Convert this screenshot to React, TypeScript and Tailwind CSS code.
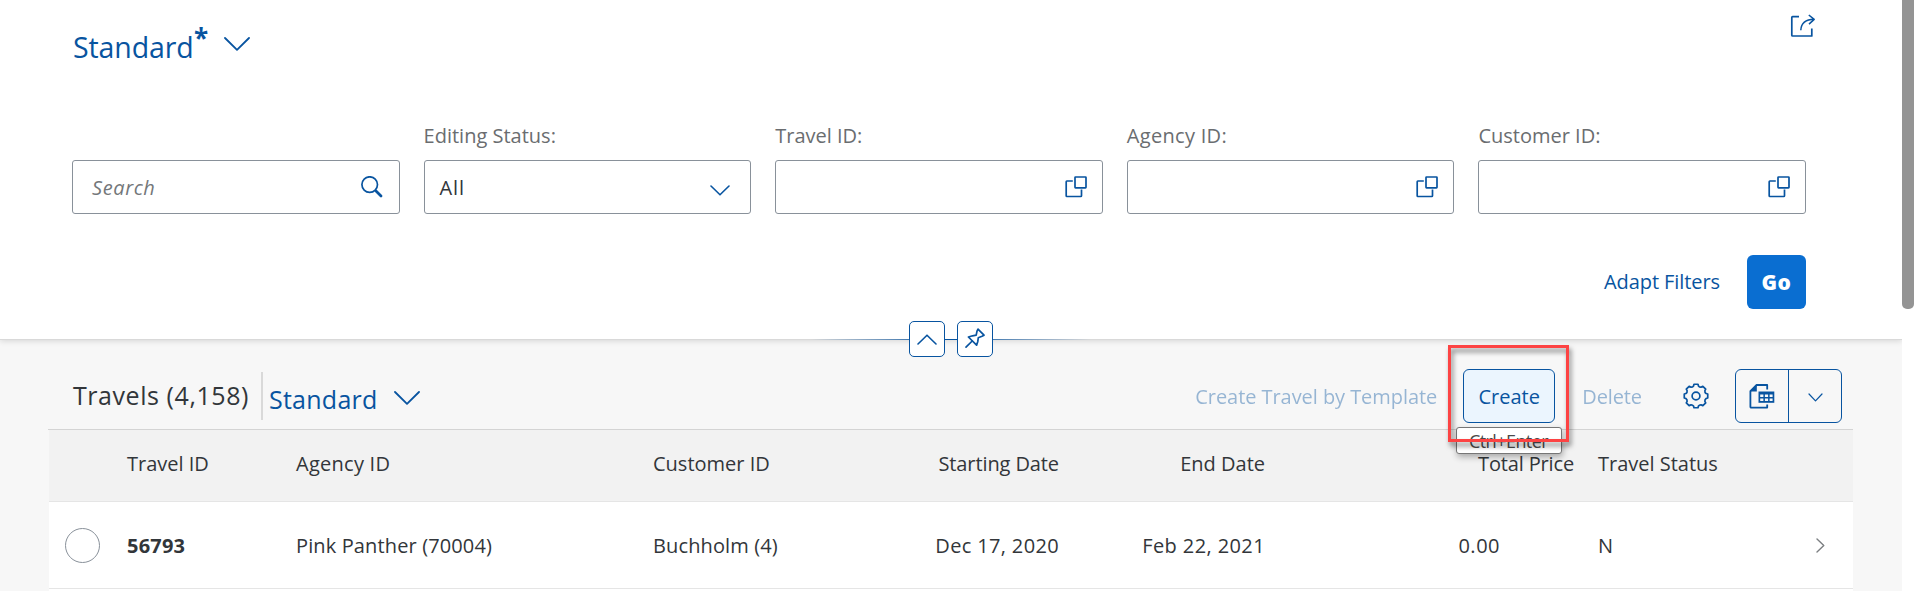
import type { ReactNode } from 'react';

type IconProps = { className?: string };

function Chevron({ className, w, h, stroke = 1.8 }: IconProps & { w: number; h: number; stroke?: number }) {
  return (
    <svg className={className} width={w} height={h} viewBox={`0 0 ${w} ${h}`} fill="none" stroke="currentColor" strokeWidth={stroke} strokeLinecap="round" strokeLinejoin="round">
      <path d={`M1 1L${w / 2} ${h - 1.2}L${w - 1} 1`} />
    </svg>
  );
}

function ShareIcon() {
  return (
    <svg width="26" height="24" viewBox="0 0 26 24" fill="none" stroke="currentColor" strokeWidth="1.7" strokeLinecap="butt" strokeLinejoin="round">
      <path d="M9 2.6H2.6a.8.8 0 0 0-.8.8v17.8a.8.8 0 0 0 .8.8h19.2V14.4" />
      <path d="M10.8 16.2c.3-6.4 3.8-10.7 13.4-10.9M18.8 1l5.4 4.4-5.2 4.7" strokeWidth="1.5" />
    </svg>
  );
}

function SearchIcon() {
  return (
    <svg width="22" height="22" viewBox="0 0 22 22" fill="none" stroke="currentColor" strokeLinecap="round">
      <circle cx="8.7" cy="8.6" r="7.8" strokeWidth="1.7" />
      <path d="M15 15L20 20" strokeWidth="2.8" />
    </svg>
  );
}

function ValueHelpIcon() {
  return (
    <svg width="22" height="22" viewBox="0 0 22 22" fill="none" stroke="currentColor" strokeWidth="1.7" strokeLinejoin="round">
      <rect x="10" y="1" width="11" height="10.8" rx=".5" />
      <path d="M7.8 5H1.9a.7.7 0 0 0-.7.7v14.1a.7.7 0 0 0 .7.7h13.9a.7.7 0 0 0 .7-.7v-6.2" />
    </svg>
  );
}

function PinIcon() {
  return (
    <svg width="20" height="20" viewBox="0 0 20 20" fill="none" stroke="currentColor" strokeWidth="1.7" strokeLinecap="round" strokeLinejoin="round">
      <path d="M13 1.1L19 7.2L17 8.3L13.3 9.7L12.8 13.4L11.6 17.2L3.4 9L7.6 7.8L11.2 7.2L12 3.2Z" />
      <path d="M7.2 13L1 19.1" />
    </svg>
  );
}

function GearIcon() {
  const pts: string[] = [];
  for (let i = 0; i < 8; i++) {
    const a = (i * Math.PI) / 4 - Math.PI / 2;
    const p = (r: number, d: number) => `${(13 + r * Math.cos(a + d)).toFixed(2)} ${(13 + r * Math.sin(a + d)).toFixed(2)}`;
    pts.push(`${i ? 'L' : 'M'}${p(11.9, -0.17)}L${p(11.9, 0.17)}L${p(10.4, 0.24)}Q${p(9.3, Math.PI / 8)} ${p(10.4, Math.PI / 4 - 0.24)}`);
  }
  return (
    <svg width="26" height="26" viewBox="0 0 26 26" fill="none" stroke="currentColor" strokeWidth="1.7" strokeLinejoin="round">
      <path d={`${pts.join('')}Z`} />
      <circle cx="13" cy="13" r="3.9" />
    </svg>
  );
}

function ExportIcon() {
  return (
    <svg width="26" height="26" viewBox="0 0 26 26" fill="none" stroke="currentColor" strokeWidth="1.8" strokeLinejoin="round">
      <path d="M18.2 6.4V2H7.6L1.4 8.2V23.8a.8.8 0 0 0 .8.8H18.2V21.4" />
      <path d="M7.8 1.2V8.6H1Z" fill="currentColor" stroke="none" />
      <path d="M9.5 8.5h15.8v11.3H9.5z" fill="currentColor" stroke="none" />
      <path d="M11.2 11.6h3.2v2.4h-3.2zM15.9 11.6h3.2v2.4h-3.2zM20.6 11.6h3v2.4h-3zM11.2 15.5h3.2v2.4h-3.2zM15.9 15.5h3.2v2.4h-3.2zM20.6 15.5h3v2.4h-3z" fill="#f7f7f7" stroke="none" />
    </svg>
  );
}

function Field({ label, children }: { label?: ReactNode; children: ReactNode }) {
  return (
    <div className="flex flex-col">
      <div className="h-[38px] pt-px leading-[26px] text-[#6a6d70]">{label}</div>
      <div className="flex h-[54px] items-center justify-between rounded-[3px] border border-[#89919a] bg-white pr-[15px] pl-[15px]">
        {children}
      </div>
    </div>
  );
}

function FilterBar() {
  return (
    <header className="relative flex h-[340px] flex-col border-b border-[#d9d9d9] bg-white shadow-[0_1px_6px_rgba(0,0,0,0.14)]">
      <div className="flex h-[122px] items-start justify-between pr-[86px] pl-[73px] text-[#0854a0]">
        <div className="flex">
          <span className="mt-[27px] w-[119px] text-[28.5px] leading-[40px] tracking-[-0.1px]">Standard</span>
          <span className="mt-[18px] ml-[2px] w-[13px] text-[26px] leading-[40px] font-bold">*</span>
          <Chevron w={26} h={14} className="mt-[37px] ml-[17px]" stroke={1.8} />
        </div>
        <span className="mt-[14px]"><ShareIcon /></span>
      </div>
      <div className="grid grid-cols-5 gap-x-6 pr-24 pl-[72px]">
        <Field>
          <span className="pt-px pl-[4px] tracking-[0.6px] text-[#74777a] italic">Search</span>
          <span className="pr-px text-[#0854a0]"><SearchIcon /></span>
        </Field>
        <Field label={<span>Editing Status:</span>}>
          <span className="pt-[2px] tracking-[0.8px] text-[#32363a]">All</span>
          <Chevron w={20} h={11} className="mt-[7px] mr-[5px] text-[#0854a0]" stroke={1.6} />
        </Field>
        <Field label="Travel ID:">
          <span />
          <span className="text-[#0854a0]"><ValueHelpIcon /></span>
        </Field>
        <Field label={<span className="tracking-[0.3px]">Agency ID:</span>}>
          <span />
          <span className="text-[#0854a0]"><ValueHelpIcon /></span>
        </Field>
        <Field label="Customer ID:">
          <span />
          <span className="text-[#0854a0]"><ValueHelpIcon /></span>
        </Field>
      </div>
      <div className="mt-[41px] flex items-center justify-end gap-[27px] pr-[108px] text-[#0854a0]">
        <button className="tracking-[-0.08px]">Adapt Filters</button>
        <button className="-mr-3 h-[54px] w-[59px] rounded-[6px] bg-[#0a6ed1] text-[21px] font-extrabold tracking-[0.6px] text-white">Go</button>
      </div>
      <div className="absolute bottom-[-1px] left-[811px] h-px w-[280px] bg-linear-to-r from-transparent via-[#0854a0] via-50% to-transparent" />
      <div className="absolute top-[321px] left-[909px] flex gap-3 text-[#0854a0]">
        <span className="absolute top-[18px] left-9 h-px w-3 bg-current" />
        <button className="flex size-9 items-center justify-center rounded-[5px] border border-current bg-white">
          <Chevron w={20} h={11} className="rotate-180" stroke={1.6} />
        </button>
        <button className="flex size-9 items-center justify-center rounded-[5px] border border-current bg-white pb-[3px]">
          <PinIcon />
        </button>
      </div>
    </header>
  );
}

function Toolbar() {
  return (
    <div className="flex h-[89px] items-start justify-between pr-[60px] pl-[73px]">
      <div className="flex items-start text-[25px] leading-[32px]">
        <h2 className="mt-[39px] w-[188px] tracking-[0.56px] whitespace-nowrap text-[#32363a]">Travels (4,158)</h2>
        <span className="mt-[32px] h-12 w-[2px] bg-[#d9d9d9]" />
        <span className="mt-[43px] ml-[6px] tracking-[0.25px] text-[#0854a0]">Standard</span>
        <Chevron w={26} h={14} className="mt-[51px] ml-[16px] text-[#0854a0]" stroke={1.8} />
      </div>
      <div className="mt-[29px] flex h-[54px] items-center text-[#0854a0]">
        <button className="pt-px tracking-[-0.06px] opacity-40">Create Travel by Template</button>
        <button className="ml-[26px] h-[54px] w-[92px] rounded-[6px] border border-current bg-[#ebf5fe] pt-px font-medium">Create</button>
        <button className="ml-[27px] pt-px tracking-[-0.1px] opacity-40">Delete</button>
        <button className="ml-[41px]"><GearIcon /></button>
        <div className="ml-[26px] flex h-[54px] w-[107px] rounded-[6px] border border-current">
          <button className="flex w-[53px] items-center justify-center border-r border-current"><ExportIcon /></button>
          <button className="flex flex-1 items-center justify-center pt-[3px]"><Chevron w={15} h={9} stroke={1.2} /></button>
        </div>
      </div>
    </div>
  );
}

const columns = 'grid grid-cols-[78px_169px_357px_206px_200px_206px_309px_1fr] items-center whitespace-nowrap';

function TravelTable() {
  return (
    <div className="mr-[49px] ml-12 border-t border-[#d4d4d4] text-[#32363a]">
      <div className="ml-px">
        <div className={`${columns} h-[72px] border-b border-[#e5e5e5] bg-[#f2f2f2] pb-[3px]`}>
          <span />
          <span>Travel ID</span>
          <span className="tracking-[0.26px]">Agency ID</span>
          <span>Customer ID</span>
          <span className="text-right tracking-[-0.1px]">Starting Date</span>
          <span className="text-right">End Date</span>
          <span className="text-right tracking-[-0.15px]">Total Price</span>
          <span className="pl-6">Travel Status</span>
        </div>
        <div className={`${columns} h-[87px] border-b border-[#e5e5e5] bg-white`}>
          <span className="ml-4 size-[35px] rounded-full border border-[#89919a] bg-white" />
          <span className="pt-px font-bold tracking-[0.2px]">56793</span>
          <span className="pt-px tracking-[0.13px]">Pink Panther (70004)</span>
          <span className="pt-px tracking-[0.13px]">Buchholm (4)</span>
          <span className="pt-px text-right tracking-[0.35px]">Dec 17, 2020</span>
          <span className="pt-px text-right tracking-[0.4px]">Feb 22, 2021</span>
          <span className="pt-px pr-[74px] text-right tracking-[0.5px]">0.00</span>
          <span className="flex items-center justify-between pt-px pr-[25px] pl-6">
            <span>N</span>
            <Chevron w={15} h={9} className="-rotate-90 text-[#7c7f82]" stroke={1.4} />
          </span>
        </div>
        <div className="h-2 bg-white" />
      </div>
    </div>
  );
}

export default function App() {
  return (
    <div className="relative flex h-[591px] w-[1914px] overflow-hidden bg-white font-['Open_Sans','Noto_Sans',sans-serif] text-[20px] leading-[26px]">
      <main className="h-full w-[1902px] overflow-hidden bg-[#f7f7f7]">
        <FilterBar />
        <Toolbar />
        <TravelTable />
      </main>
      <div className="h-full w-3 bg-white">
        <div className="h-[309px] rounded-b-[5px] bg-[#949494]" />
      </div>
      <div className="absolute top-[427px] left-[1456px] flex h-[27px] w-[106px] items-center justify-center rounded-[3px] border border-[#767676] bg-white pr-px text-[18px] tracking-[-0.6px] text-[#4a4a4a] shadow-[1px_3px_6px_rgba(0,0,0,0.3)]">
        Ctrl+Enter
      </div>
      <div className="pointer-events-none absolute top-[345px] left-[1448px] h-[97px] w-[121px] border-[3px] border-[#fd4343] drop-shadow-[2px_4px_2.5px_rgba(0,0,0,0.5)]" />
    </div>
  );
}
